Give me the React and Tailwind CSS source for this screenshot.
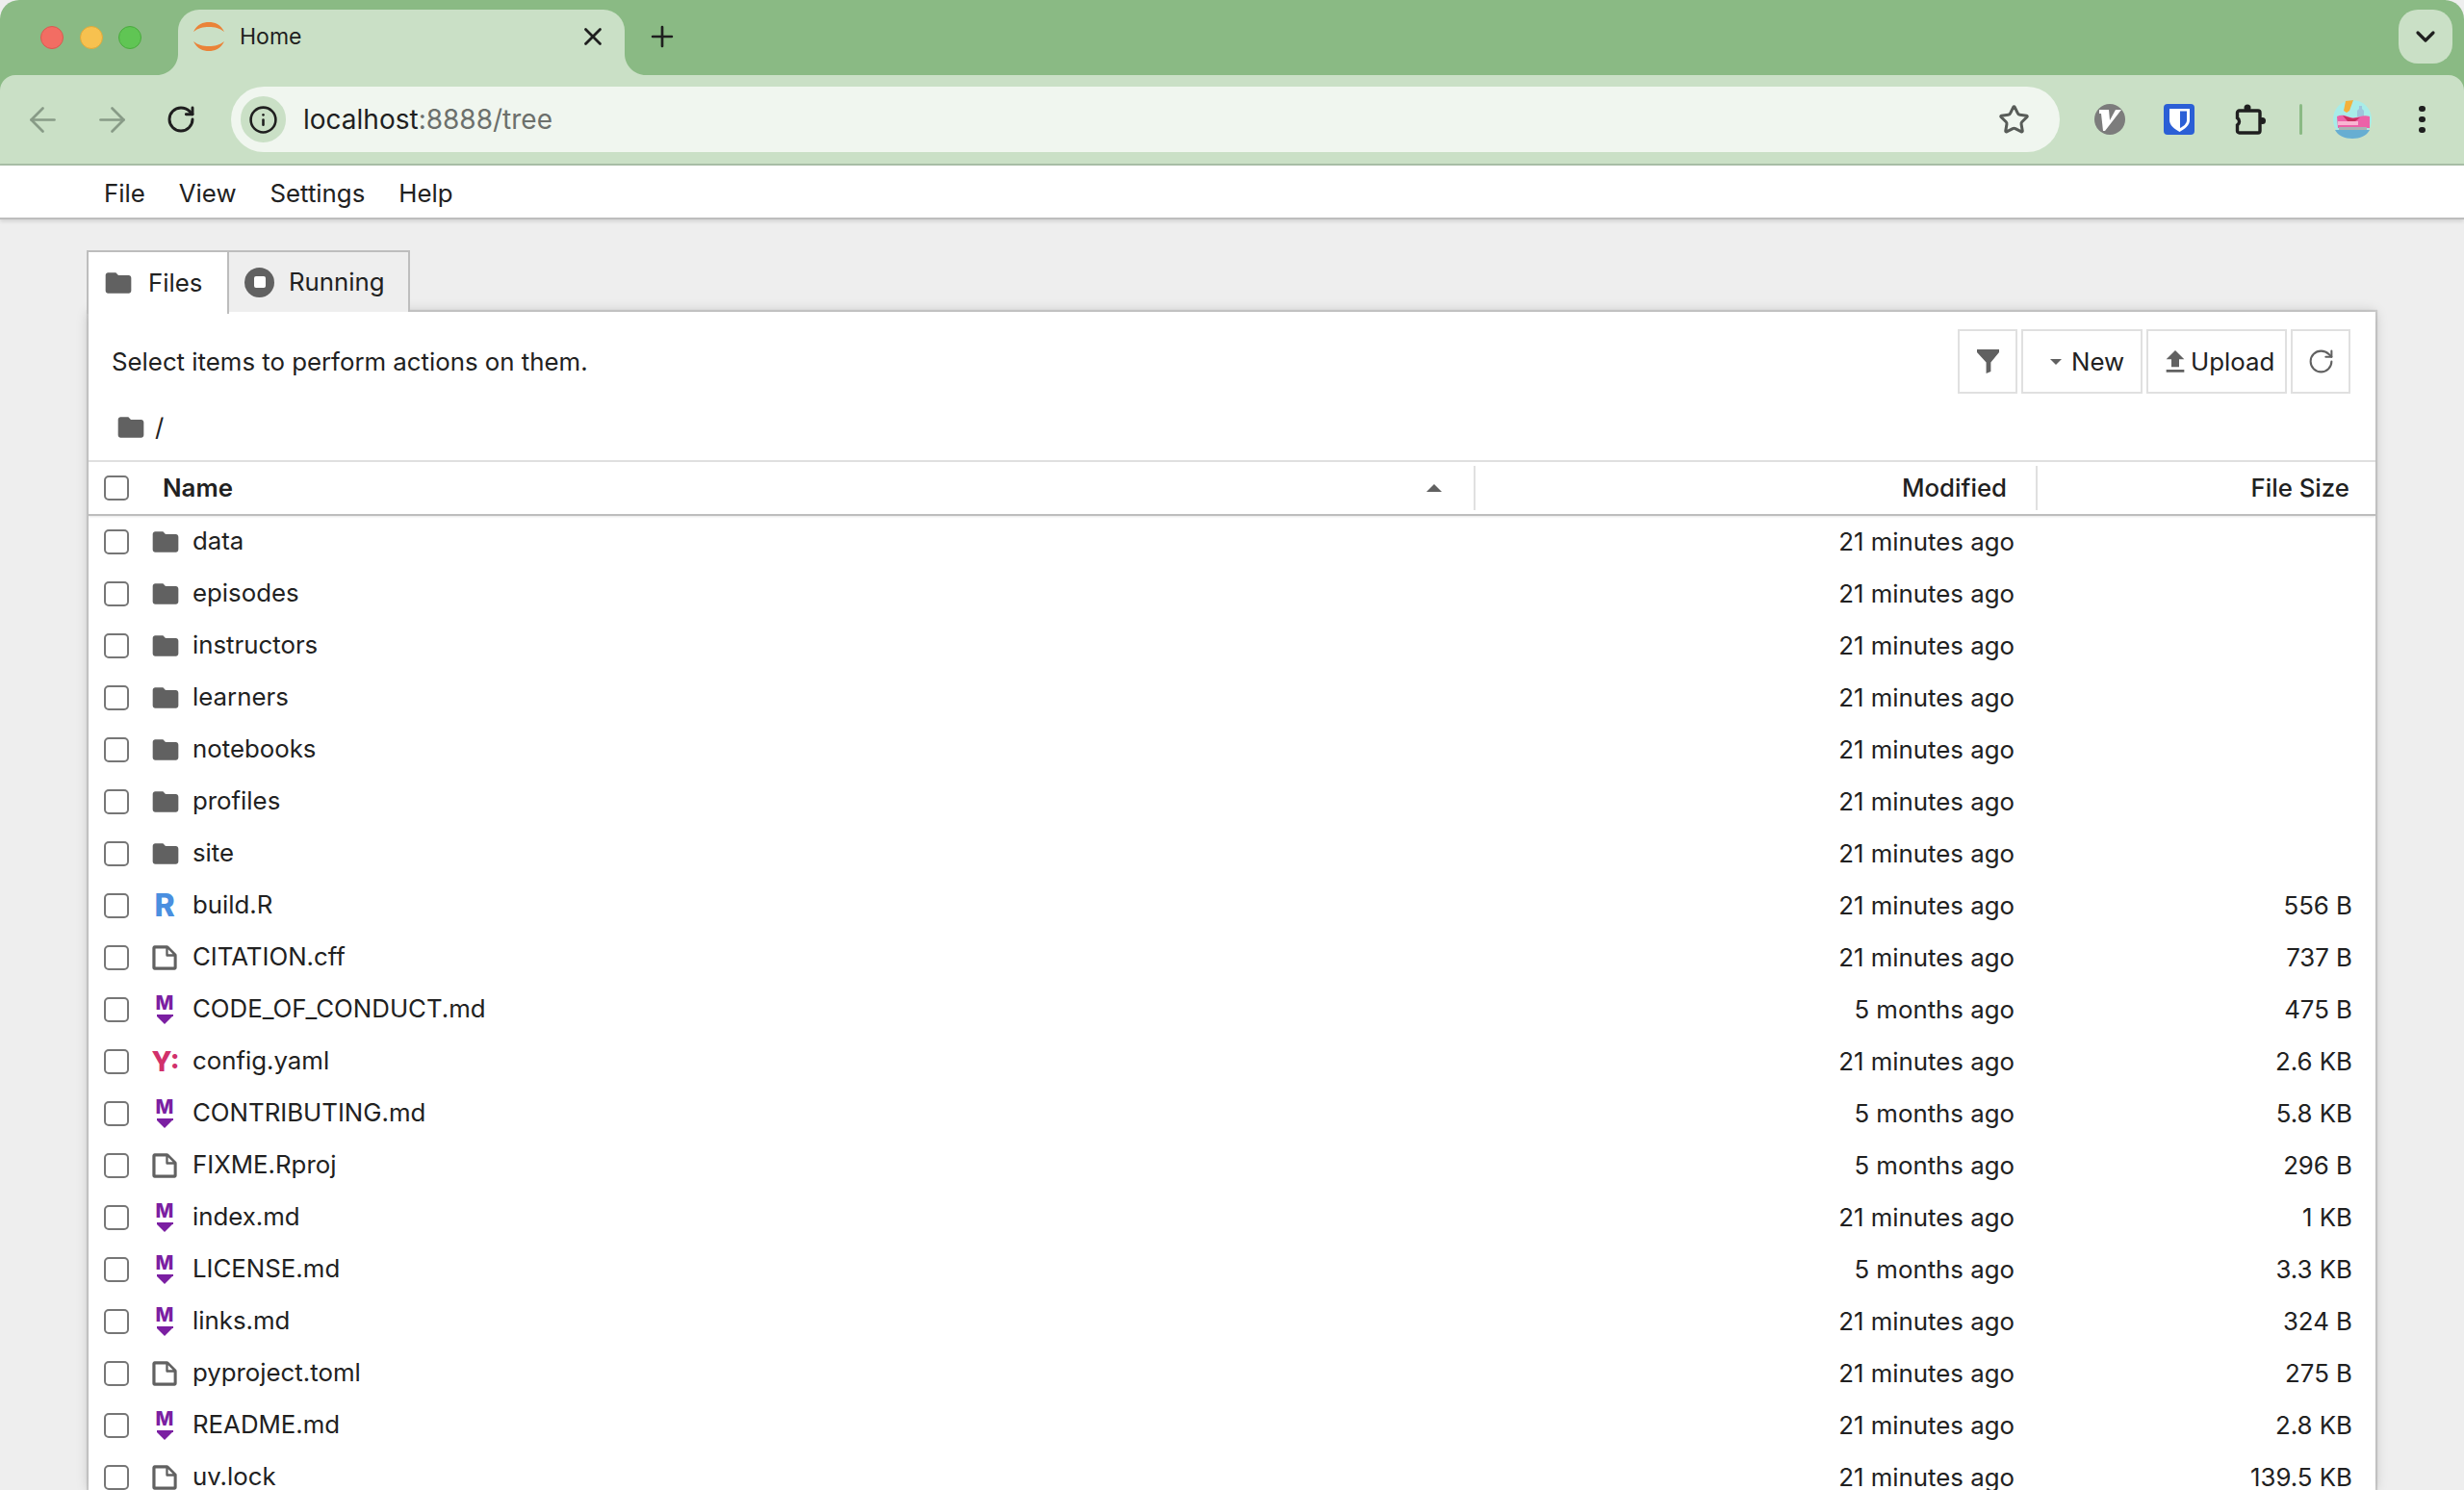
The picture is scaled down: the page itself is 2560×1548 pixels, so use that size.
import { ArrowLeft, ArrowRight, RotateCw, Star, X, Plus, ChevronDown, Info } from "lucide-react"

const files = [
  { name: "data", type: "folder", modified: "21 minutes ago", size: "" },
  { name: "episodes", type: "folder", modified: "21 minutes ago", size: "" },
  { name: "instructors", type: "folder", modified: "21 minutes ago", size: "" },
  { name: "learners", type: "folder", modified: "21 minutes ago", size: "" },
  { name: "notebooks", type: "folder", modified: "21 minutes ago", size: "" },
  { name: "profiles", type: "folder", modified: "21 minutes ago", size: "" },
  { name: "site", type: "folder", modified: "21 minutes ago", size: "" },
  { name: "build.R", type: "r", modified: "21 minutes ago", size: "556 B" },
  { name: "CITATION.cff", type: "file", modified: "21 minutes ago", size: "737 B" },
  { name: "CODE_OF_CONDUCT.md", type: "md", modified: "5 months ago", size: "475 B" },
  { name: "config.yaml", type: "yaml", modified: "21 minutes ago", size: "2.6 KB" },
  { name: "CONTRIBUTING.md", type: "md", modified: "5 months ago", size: "5.8 KB" },
  { name: "FIXME.Rproj", type: "file", modified: "5 months ago", size: "296 B" },
  { name: "index.md", type: "md", modified: "21 minutes ago", size: "1 KB" },
  { name: "LICENSE.md", type: "md", modified: "5 months ago", size: "3.3 KB" },
  { name: "links.md", type: "md", modified: "21 minutes ago", size: "324 B" },
  { name: "pyproject.toml", type: "file", modified: "21 minutes ago", size: "275 B" },
  { name: "README.md", type: "md", modified: "21 minutes ago", size: "2.8 KB" },
  { name: "uv.lock", type: "file", modified: "21 minutes ago", size: "139.5 KB" },
]

function FolderIcon({ className }) {
  return (
    <svg viewBox="0 0 24 24" className={className} fill="#616161">
      <path d="M10 4H4c-1.1 0-1.99.9-1.99 2L2 18c0 1.1.9 2 2 2h16c1.1 0 2-.9 2-2V8c0-1.1-.9-2-2-2h-8l-2-2z" />
    </svg>
  )
}

function FileTypeIcon({ type }) {
  if (type === "folder") return <FolderIcon className="w-[32px] h-[32px] ml-[2px]" />
  if (type === "r")
    return <span className="text-[32px] leading-[32px] font-extrabold text-[#4a8fe0]">R</span>
  if (type === "md")
    return (
      <span className="flex flex-col items-center h-[32px]">
        <span className="text-[20px] leading-[19px] font-extrabold text-[#7b1fa2]">M</span>
        <span className="w-[17px] h-[2px] bg-[#7b1fa2] mt-[2px]" />
        <span className="w-0 h-0 border-l-[8px] border-r-[8px] border-t-[8px] border-l-transparent border-r-transparent border-t-[#7b1fa2]" />
      </span>
    )
  if (type === "yaml")
    return <span className="text-[28px] leading-[32px] font-extrabold text-[#d1306b] ml-[2px]">Y:</span>
  return (
    <svg viewBox="0 0 22 22" className="w-[32px] h-[32px]" fill="#616161">
      <path d="M19.3 8.2l-5.5-5.5c-.3-.3-.7-.5-1.2-.5H3.9c-.8.1-1.6.9-1.6 1.8v14.1c0 .9.7 1.6 1.6 1.6h14.2c.9 0 1.6-.7 1.6-1.6V9.4c.1-.5-.1-.9-.4-1.2zm-5.8-3.3l3.4 3.6h-3.4V4.9zm3.9 12.7H4.7c-.1 0-.2 0-.2-.2V4.7c0-.2.1-.3.2-.3h7.2v4.4s0 .8.3 1.1c.3.3 1.1.3 1.1.3h4.3v7.2s-.1.2-.2.2z" />
    </svg>
  )
}

function Checkbox() {
  return <span className="block w-[26px] h-[26px] rounded-[5px] border-2 border-[#767676] bg-white shrink-0" />
}

function FileRow({ file }) {
  return (
    <div className="flex items-center h-[54px] shrink-0">
      <div className="w-[51px] pl-[16px] shrink-0"><Checkbox /></div>
      <div className="w-[56px] flex justify-center shrink-0"><FileTypeIcon type={file.type} /></div>
      <div className="flex-1 pl-[1px] pb-[2px]">{file.name}</div>
      <div className="w-[400px] text-right shrink-0">{file.modified}</div>
      <div className="w-[375px] pr-[24px] text-right shrink-0">{file.size}</div>
    </div>
  )
}

function TabCorner({ side }) {
  // concave corner where the active tab meets the toolbar
  return (
    <svg viewBox="0 0 22 22" className={`absolute bottom-0 w-[22px] h-[22px] ${side === "left" ? "-left-[22px]" : "-right-[22px]"}`} fill="#cae0c6">
      {side === "left" ? <path d="M22 0v22H0C12 22 22 12 22 0z" /> : <path d="M0 0v22h22C10 22 0 12 0 0z" />}
    </svg>
  )
}

function ChromeBar() {
  return (
    <div className="bg-[#8aba84] rounded-t-[20px] overflow-hidden shrink-0">
      {/* tab strip */}
      <div className="h-[78px] flex items-end pl-[42px] pr-[12px]">
        <div className="flex items-center gap-[16.5px] h-[78px] shrink-0">
          <span className="w-[24px] h-[24px] rounded-full bg-[#f26d63] border border-[#d85a50]" />
          <span className="w-[24px] h-[24px] rounded-full bg-[#f7c14f] border border-[#dfa93a]" />
          <span className="w-[24px] h-[24px] rounded-full bg-[#60c554] border border-[#4aab3e]" />
        </div>
        <div className="relative w-[464px] h-[68px] bg-[#cae0c6] rounded-t-[22px] flex items-center pl-[16px] pr-[18px] pb-[12px] ml-[38px] shrink-0">
          <TabCorner side="left" />
          <TabCorner side="right" />
          <svg viewBox="0 0 32 32" className="w-[32px] h-[32px] shrink-0">
            <path d="M0 11C4 3 10 1 16 1s12 2 16 10C27 7 22 6 16 6S5 7 0 11z" fill="#ea8338" />
            <path d="M0 21c4 8 10 10 16 10s12-2 16-10c-5 4-10 5-16 5S5 25 0 21z" fill="#ea8338" />
          </svg>
          <span className="ml-[16px] text-[23px] text-[#1f1f1f] flex-1">Home</span>
          <X className="w-[30px] h-[30px] text-[#1f1f1f]" strokeWidth={2.2} />
        </div>
        <div className="flex items-center h-[68px] pl-[22px] pb-[12px] flex-1">
          <Plus className="w-[34px] h-[34px] text-[#1f1f1f]" strokeWidth={1.9} />
        </div>
        <div className="self-start mt-[10px] w-[56px] h-[56px] rounded-[20px] bg-[#cae0c6] flex items-center justify-center">
          <ChevronDown className="w-[32px] h-[32px] text-[#1f1f1f]" strokeWidth={2.4} />
        </div>
      </div>
      {/* toolbar */}
      <div className="h-[94px] bg-[#cae0c6] rounded-t-[16px] border-b-2 border-[#a9bfa7] flex items-center pl-[24px]">
        <ArrowLeft className="w-[41px] h-[41px] text-[#889b87] shrink-0" strokeWidth={1.6} />
        <ArrowRight className="w-[41px] h-[41px] text-[#889b87] ml-[31px] shrink-0" strokeWidth={1.6} />
        <RotateCw className="w-[32px] h-[32px] text-[#1f1f1f] ml-[35px] shrink-0" strokeWidth={2.2} />
        <div className="ml-[36px] w-[1900px] h-[68px] rounded-full bg-[#f0f6ef] flex items-center pl-[10px] pr-[31.5px] shrink-0">
          <span className="w-[47px] h-[48px] rounded-full bg-[#cae0c6] flex items-center justify-center">
            <Info className="w-[31px] h-[31px] text-[#1f1f1f]" strokeWidth={2} />
          </span>
          <span className="ml-[18px] text-[28px] flex-1 text-[#1f1f1f]">
            localhost<span className="text-[#6c706c]">:8888/tree</span>
          </span>
          <Star className="w-[33px] h-[33px] text-[#585c58]" strokeWidth={2.2} />
        </div>
        {/* extension icons */}
        <svg viewBox="0 0 32 32" className="w-[32px] h-[32px] ml-[36px] shrink-0">
          <circle cx="16" cy="16" r="16" fill="#7c7c7c" />
          <path d="M5 6h10l1 11 6-11h6L11 28H9L7 10H5z" fill="#fff" />
        </svg>
        <svg viewBox="0 0 32 32" className="w-[32px] h-[32px] ml-[40px] shrink-0">
          <rect width="32" height="32" rx="4" fill="#2b5fd6" />
          <path d="M6 5h21v12c0 5-5 9-10.500 12C11 26 6 22 6 17z" fill="#fff" />
          <path d="M17 7.500h7V17c0 3-3 6-7 8z" fill="#2b5fd6" />
        </svg>
        <svg viewBox="0 0 32 32" className="w-[32px] h-[32px] ml-[42px] shrink-0" fill="none">
          <path d="M4.500 7H24a2 2 0 0 1 2 2v19a2 2 0 0 1-2 2H4.500a2 2 0 0 1-2-2v-6a4.500 4.500 0 0 0 0-7.500V9a2 2 0 0 1 2-2z" stroke="#1f1f1f" strokeWidth="3.400" />
          <circle cx="13" cy="4" r="3.500" fill="#1f1f1f" />
          <circle cx="28.500" cy="17.500" r="3.500" fill="#1f1f1f" />
        </svg>
        <span className="w-[3px] h-[32px] rounded bg-[#8aba84] ml-[35px] shrink-0" />
        <svg viewBox="0 0 40 40" className="w-[40px] h-[40px] ml-[32px] shrink-0">
          <circle cx="20" cy="20" r="20" fill="#a8ece8" />
          <path d="M2 31h36c-3 6-10 9-18 9S5 37 2 31z" fill="#67aed2" />
          <path d="M13 1l8-1-4 11-3 2-3-2z" fill="#f4b13c" />
          <path d="M27 6h3v3l2 2v6h-7v-6l2-2z" fill="#9fc4dc" />
          <path d="M4 17c4-2 8-1 11 0s6 2 9 1 9-3 14-1v12H5z" fill="#ec62a8" />
          <path d="M10 16l10 3 8-1-5 4h-8z" fill="#c92f5f" />
          <path d="M5 22h21v4H5z" fill="#f8b6d2" />
          <rect x="6" y="28" width="29" height="3" fill="#a9b3b4" />
        </svg>
        <span className="flex flex-col gap-[4.500px] ml-[49px] shrink-0">
          <span className="w-[6.500px] h-[6.500px] rounded-full bg-[#1f1f1f]" />
          <span className="w-[6.500px] h-[6.500px] rounded-full bg-[#1f1f1f]" />
          <span className="w-[6.500px] h-[6.500px] rounded-full bg-[#1f1f1f]" />
        </span>
      </div>
    </div>
  )
}

function ToolButton({ className, children }) {
  return (
    <div className={`h-[67px] border-2 border-[#e0e0e0] flex items-center bg-white ${className}`}>
      {children}
    </div>
  )
}

export default function App() {
  return (
    <div className="w-[2560px] h-[1548px] overflow-hidden bg-[#eeeeee] flex flex-col text-[25.8px] leading-[32px] text-[#212121] font-['Inter',sans-serif]">
      <ChromeBar />

      {/* menu bar */}
      <div className="h-[56px] bg-white border-b-2 border-[#bdbdbd] shadow-[0_2px_4px_rgba(0,0,0,0.12)] flex items-center gap-[35px] pl-[108px] pt-[3px] shrink-0">
        <span>File</span>
        <span>View</span>
        <span>Settings</span>
        <span>Help</span>
      </div>

      <div className="flex-1 min-h-0 pt-[32px] pl-[90px] pr-[92px] flex flex-col">
        {/* tabs */}
        <div className="flex h-[64px] shrink-0 relative z-10">
          <div className="w-[148px] h-[66px] bg-white border-2 border-b-0 border-[#bdbdbd] flex items-center pl-[15px] gap-[15px]">
            <FolderIcon className="w-[32px] h-[32px]" />
            <span>Files</span>
          </div>
          <div className="w-[188px] h-[64px] bg-[#eeeeee] border-2 border-l-0 border-b-0 border-[#bdbdbd] flex items-center pl-[16px] gap-[15px]">
            <span className="w-[31px] h-[31px] rounded-full bg-[#616161] flex items-center justify-center">
              <span className="w-[12px] h-[12px] rounded-[2px] bg-white" />
            </span>
            <span>Running</span>
          </div>
        </div>

        {/* panel */}
        <div className="flex-1 min-h-0 ml-[2px] bg-white shadow-[0_0_1px_2px_rgba(0,0,0,0.12),0_0_12px_rgba(0,0,0,0.18)] flex flex-col overflow-hidden">
          <div className="h-[156px] shrink-0 border-b-2 border-[#e0e0e0]">
            <div className="flex items-center h-[67px] mt-[18px] pl-[24px] pr-[26px]">
              <span className="flex-1">Select items to perform actions on them.</span>
              <div className="flex gap-[4px]">
                <ToolButton className="w-[62px] justify-center">
                  <svg viewBox="0 0 24 26" className="w-[23px] h-[25px]" fill="#616161">
                    <path d="M0 0h24v3L15 14v10l-5 2V14L0 3z" />
                  </svg>
                </ToolButton>
                <ToolButton className="w-[126px] gap-[10px] pl-[28px]">
                  <span className="w-0 h-0 border-l-[6.500px] border-r-[6.500px] border-t-[6px] border-l-transparent border-r-transparent border-t-[#616161]" />
                  <span>New</span>
                </ToolButton>
                <ToolButton className="w-[146px] pl-[12px]">
                  <svg viewBox="0 0 24 24" className="w-[32px] h-[32px]" fill="#616161">
                    <path d="M9 16h6v-6h4l-7-7-7 7h4v6zm-4 2h14v2H5v-2z" />
                  </svg>
                  <span>Upload</span>
                </ToolButton>
                <ToolButton className="w-[62px] justify-center">
                  <RotateCw className="w-[29px] h-[29px] text-[#616161]" strokeWidth={1.7} />
                </ToolButton>
              </div>
            </div>
            <div className="flex items-center pl-[28px] mt-[19px] gap-[9px]">
              <FolderIcon className="w-[32px] h-[32px]" />
              <span>/</span>
            </div>
          </div>

          {/* table header */}
          <div className="flex items-center h-[56px] shrink-0 border-b-2 border-[#bdbdbd] shadow-[0_1px_2px_rgba(0,0,0,0.1)] relative z-10">
            <div className="w-[51px] pl-[16px] shrink-0"><Checkbox /></div>
            <div className="flex-1 flex items-center h-full pl-[26px] font-semibold">
              <span className="flex-1">Name</span>
              <span className="w-0 h-0 border-l-[8.500px] border-r-[8.500px] border-b-[8px] border-l-transparent border-r-transparent border-b-[#616161] mr-[33px]" />
            </div>
            <div className="w-[584px] h-[46px] border-l-2 border-[#e0e0e0] flex items-center justify-end pr-[30px] font-medium shrink-0">Modified</div>
            <div className="w-[353px] h-[46px] border-l-2 border-[#e0e0e0] flex items-center justify-end pr-[27px] font-medium shrink-0">File Size</div>
          </div>

          {files.map((file) => (
            <FileRow key={file.name} file={file} />
          ))}
        </div>
      </div>
    </div>
  )
}
